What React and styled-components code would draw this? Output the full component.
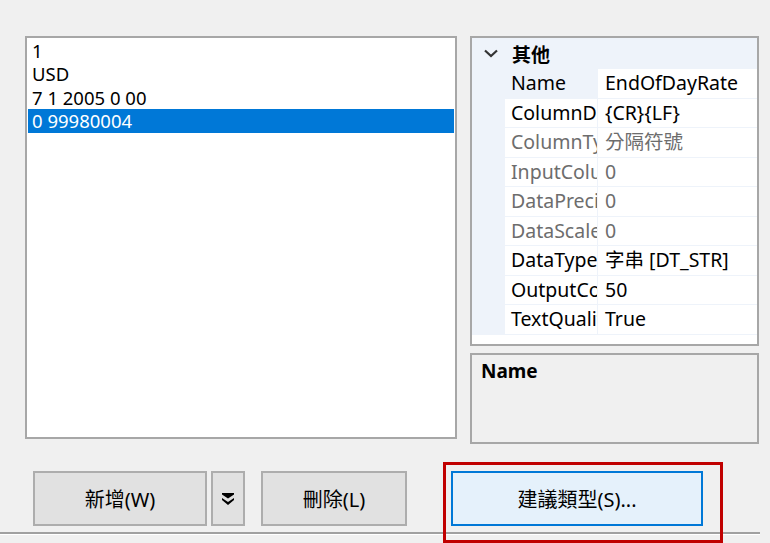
import styled, { createGlobalStyle } from 'styled-components';

const GlobalStyle = createGlobalStyle`
	html, body {
		margin: 0;
		padding: 0;
		background: #f0f0f0;
		overflow: hidden;
	}
	body {
		font-family: 'Noto Sans', 'Noto Sans CJK TC', sans-serif;
		color: #000;
	}
`;

const Page = styled.div`
	width: 770px;
	height: 543px;
	padding-top: 36px;
	box-sizing: border-box;
	display: flex;
	flex-direction: column;
`;

const TopRow = styled.div`
	display: flex;
	gap: 13px;
	padding-left: 25px;
	height: 408px;
`;

const ListBox = styled.div`
	width: 432px;
	height: 403px;
	box-sizing: border-box;
	border: 2px solid #a7a7a7;
	background: #fff;
	padding: 0.5px 1px;
`;

const ListItem = styled.div`
	height: 23.5px;
	line-height: 23.5px;
	padding-left: 4px;
	font-size: 18.5px;
	white-space: nowrap;
	background: ${(p) => (p.selected ? '#0078d7' : 'transparent')};
	color: ${(p) => (p.selected ? '#fff' : '#000')};
`;

const RightCol = styled.div`
	width: 289px;
	display: flex;
	flex-direction: column;
	gap: 7px;
`;

const Grid = styled.div`
	height: 310px;
	box-sizing: border-box;
	border: 2px solid #a7a7a7;
	background: #fff;
	display: flex;
	flex-direction: column;
`;

const GridBody = styled.div`
	background: #eef3fa;
	display: flex;
	flex-direction: column;
	gap: 1px;
	padding-bottom: 1px;
`;

const Category = styled.div`
	height: 30px;
	display: flex;
	align-items: center;
	font-weight: 700;
	font-size: 19px;
`;

const Chevron = styled.span`
	width: 33px;
	display: flex;
	justify-content: center;
	padding-left: 2px;
`;

const CategoryLabel = styled.span`
	padding-left: 5px;
	font-family: 'Noto Sans CJK TC', sans-serif;
`;

const PropRow = styled.div`
	height: 28.5px;
	margin-left: 33px;
	display: flex;
	gap: 1px;
	font-size: 19.5px;
	line-height: 28px;
	color: ${(p) => (p.dim ? '#6d6d6d' : '#000')};
`;

const PropLabel = styled.div`
	width: 92px;
	padding-left: 6px;
	box-sizing: border-box;
	overflow: hidden;
	white-space: nowrap;
	background: ${(p) => (p.selected ? 'transparent' : '#fff')};
`;

const PropValue = styled.div`
	flex: 1;
	padding-left: 7px;
	overflow: hidden;
	white-space: nowrap;
	background: #fff;
`;

const Desc = styled.div`
	height: 91px;
	box-sizing: border-box;
	border: 2px solid #a7a7a7;
	padding: 3px 9px;
	font-weight: 700;
	font-size: 19px;
`;

const ButtonRow = styled.div`
	margin-top: 27px;
	padding-left: 33px;
	display: flex;
	height: 55px;
`;

const Button = styled.button`
	width: ${(p) => p.w}px;
	height: 55px;
	margin-left: ${(p) => p.ml || 0}px;
	box-sizing: border-box;
	border: 2px solid ${(p) => (p.primary ? '#0078d7' : '#adadad')};
	background: ${(p) => (p.primary ? '#e5f1fb' : '#e1e1e1')};
	font-family: 'Noto Sans', 'Noto Sans CJK TC', sans-serif;
	font-size: 20px;
	color: #000;
	display: flex;
	align-items: center;
	justify-content: center;
	padding: 0;
`;

const Highlight = styled.div`
	position: relative;
	margin-left: 44px;
`;

const RedFrame = styled.div`
	position: absolute;
	left: -8px;
	top: -9px;
	right: -20px;
	bottom: -17px;
	border: 3px solid #c00000;
	pointer-events: none;
`;

const Separator = styled.div`
	margin-top: 6px;
	width: 760px;
	height: 2px;
	background: #a0a0a0;
	border-bottom: 1px solid #fff;
`;

const items = ['1', 'USD', '7 1 2005 0 00', '0 99980004'];

const props = [
	{ label: 'Name', value: 'EndOfDayRate', selected: true },
	{ label: 'ColumnDelimiter', value: '{CR}{LF}' },
	{ label: 'ColumnType', value: '分隔符號', dim: true },
	{ label: 'InputColumnWidth', value: '0', dim: true },
	{ label: 'DataPrecision', value: '0', dim: true },
	{ label: 'DataScale', value: '0', dim: true },
	{ label: 'DataType', value: '字串 [DT_STR]' },
	{ label: 'OutputColumnWidth', value: '50' },
	{ label: 'TextQualified', value: 'True' },
];

const App = () => {
	return (
		<Page>
			<GlobalStyle />
			<TopRow>
				<ListBox>
					{items.map((t, i) => (
						<ListItem key={t} selected={i === 3}>
							{t}
						</ListItem>
					))}
				</ListBox>
				<RightCol>
					<Grid>
						<GridBody>
							<Category>
								<Chevron>
									<svg width='14' height='9' viewBox='0 0 14 9'>
										<path d='M1 1.5 L7 7 L13 1.5' fill='none' stroke='#333' strokeWidth='2.2' />
									</svg>
								</Chevron>
								<CategoryLabel>其他</CategoryLabel>
							</Category>
							{props.map((p) => (
								<PropRow key={p.label} dim={p.dim}>
									<PropLabel selected={p.selected}>{p.label}</PropLabel>
									<PropValue>{p.value}</PropValue>
								</PropRow>
							))}
						</GridBody>
					</Grid>
					<Desc>Name</Desc>
				</RightCol>
			</TopRow>
			<ButtonRow>
				<Button w={174}>新增(W)</Button>
				<Button w={34} ml={4}>
					<svg width='12' height='12' viewBox='0 0 12 12'>
						<polygon points='0,0 12,0 12,1.6 6,5.6 0,1.6' fill='#000' />
						<polygon points='0,5 6,9 12,5 12,7 6,12 0,7' fill='#000' />
					</svg>
				</Button>
				<Button w={146} ml={16}>
					刪除(L)
				</Button>
				<Highlight>
					<Button w={252} primary>
						建議類型(S)...
					</Button>
					<RedFrame />
				</Highlight>
			</ButtonRow>
			<Separator />
		</Page>
	);
};

export default App;
